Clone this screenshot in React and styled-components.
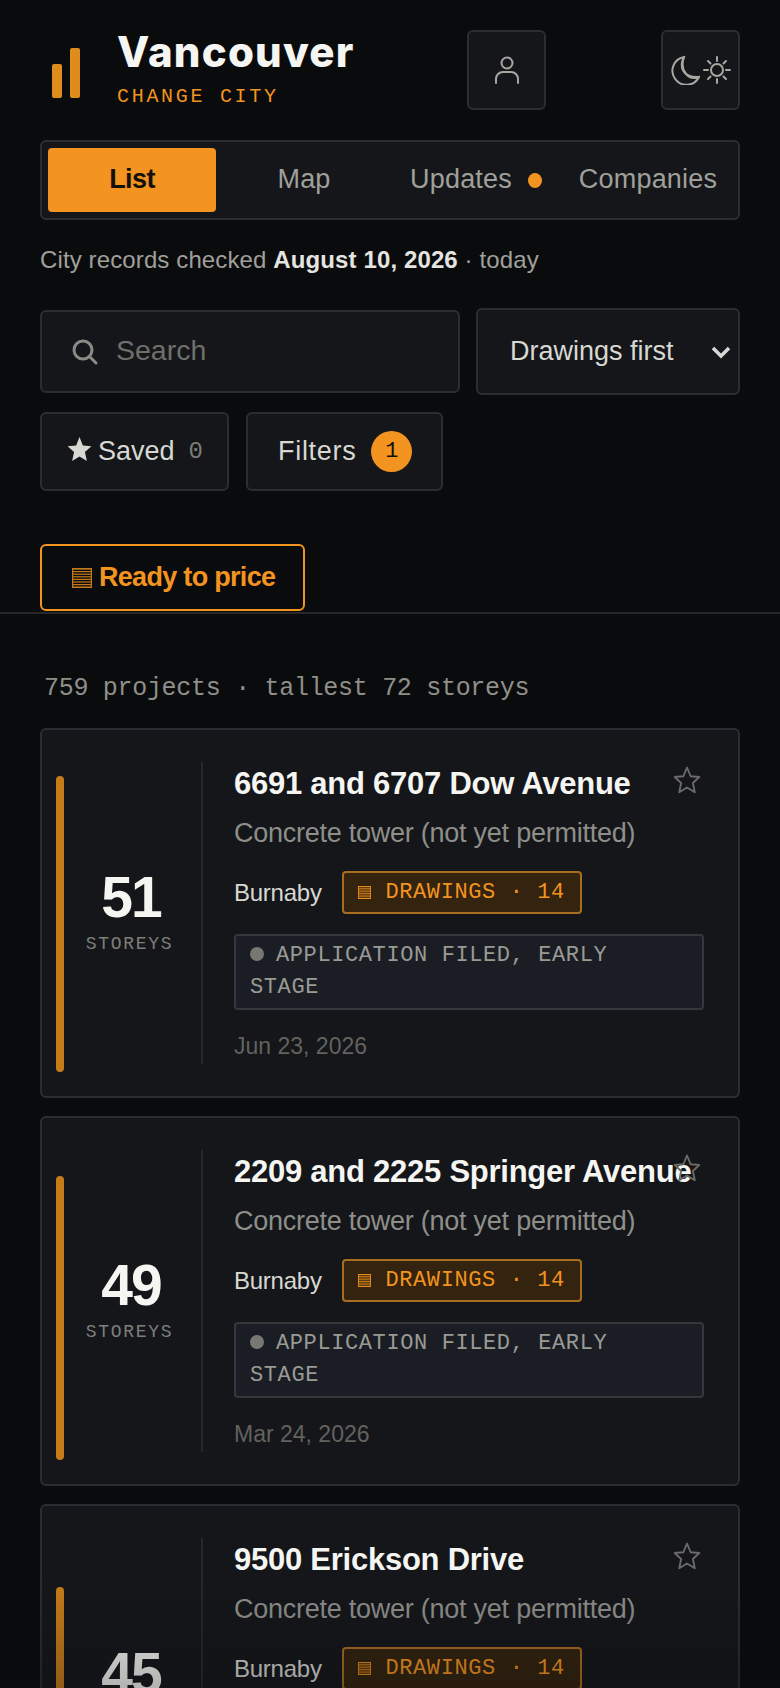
import styled, { createGlobalStyle } from "styled-components";

const sans = `"Liberation Sans", Arial, sans-serif`;
const mono = `"Liberation Mono", monospace`;
const orange = "#f2941f";

const GlobalStyle = createGlobalStyle`
  html, body {
    margin: 0;
    padding: 0;
    background: #0a0b0d;
    overflow: hidden;
  }
  * {
    box-sizing: border-box;
  }
`;

const Page = styled.div`
  position: relative;
  width: 780px;
  height: 1688px;
  overflow: hidden;
  background: #0a0b0d;
  font-family: ${sans};
  color: #e5e5e0;
`;

const BottomFade = styled.div`
  position: absolute;
  left: 0;
  right: 0;
  bottom: 0;
  height: 110px;
  pointer-events: none;
  background: linear-gradient(rgba(10, 11, 13, 0), rgba(10, 11, 13, 0.28));
`;

const Top = styled.div`
  padding: 30px 40px 0;
`;

const Header = styled.header`
  display: flex;
  align-items: flex-start;
  height: 79px;
`;

const Logo = styled.svg`
  width: 28px;
  height: 50px;
  margin: 18px 37px 0 12px;
  flex: none;
`;

const CityBlock = styled.div`
  width: 350px;
  flex: none;
`;

const CityName = styled.h1`
  margin: 0;
  font-family: Inter, ${sans};
  font-size: 42px;
  line-height: 44px;
  font-weight: 800;
  letter-spacing: 1.2px;
  color: #f5f5f2;
`;

const ChangeCity = styled.div`
  margin-top: 12px;
  font-family: ${mono};
  font-size: 20px;
  line-height: 22px;
  letter-spacing: 2.7px;
  color: ${orange};
`;

const IconButton = styled.button`
  width: 79px;
  height: 80px;
  padding: 0;
  display: flex;
  align-items: center;
  justify-content: center;
  gap: 2px;
  background: #14161a;
  border: 2px solid #2a2d31;
  border-radius: 6px;
  color: #a8a8a2;
`;

const HeaderGap = styled.div`
  flex: 1;
`;

const Tabs = styled.nav`
  margin-top: 31px;
  height: 80px;
  padding: 6px;
  display: grid;
  grid-template-columns: repeat(4, 1fr);
  gap: 4px;
  background: #14161a;
  border: 2px solid #2a2d31;
  border-radius: 6px;
`;

const Tab = styled.div`
  display: flex;
  align-items: center;
  justify-content: center;
  gap: 16px;
  padding-bottom: 2px;
  border-radius: 4px;
  font-size: 27px;
  letter-spacing: ${(p) => (p.$active ? "-0.6px" : "0.2px")};
  background: ${(p) => (p.$active ? orange : "transparent")};
  color: ${(p) => (p.$active ? "#14110c" : "#a0a09a")};
  font-weight: ${(p) => (p.$active ? 700 : 400)};
`;

const Dot = styled.span`
  width: 14px;
  height: 15px;
  margin-top: 2px;
  border-radius: 50%;
  background: ${orange};
`;

const Checked = styled.p`
  margin: 22px 0 0;
  font-size: 24px;
  line-height: 36px;
  letter-spacing: 0.12px;
  color: #a0a09a;

  strong {
    color: #e5e5e0;
  }
`;

const SearchRow = styled.div`
  margin-top: 30px;
  display: flex;
  align-items: center;
  gap: 16px;
`;

const SearchBox = styled.div`
  width: 420px;
  height: 83px;
  padding-left: 29px;
  display: flex;
  align-items: center;
  gap: 17px;
  background: #14161a;
  border: 2px solid #2a2d31;
  border-radius: 6px;
  color: #8a8a85;
`;

const Placeholder = styled.span`
  font-size: 28.5px;
  padding-bottom: 2px;
  color: #6f6f6b;
`;

const SortSelect = styled.div`
  width: 264px;
  height: 87px;
  padding: 0 7px 0 32px;
  display: flex;
  align-items: center;
  justify-content: space-between;
  background: #14161a;
  border: 2px solid #2a2d31;
  border-radius: 6px;
  font-size: 27px;
  color: #d8d8d3;
`;

const ButtonRow = styled.div`
  margin-top: 17px;
  display: flex;
  gap: 17px;
`;

const ToolButton = styled.div`
  height: 79px;
  display: flex;
  align-items: center;
  background: #14161a;
  border: 2px solid #2a2d31;
  border-radius: 6px;
  font-size: 27px;
  color: #d8d8d3;
`;

const SavedButton = styled(ToolButton)`
  width: 189px;
  padding-left: 25px;
`;

const FiltersButton = styled(ToolButton)`
  width: 197px;
  padding-left: 30px;
  gap: 15px;
  letter-spacing: 0.7px;
`;

const FilledStar = styled.svg`
  width: 25px;
  height: 27px;
  margin-right: 6px;
  margin-top: -4px;
`;

const SavedCount = styled.span`
  margin-left: 14px;
  font-family: ${mono};
  font-size: 24px;
  color: #7c7c78;
`;

const CountBadge = styled.span`
  width: 41px;
  height: 41px;
  display: flex;
  align-items: center;
  justify-content: center;
  border-radius: 50%;
  background: ${orange};
  font-family: ${mono};
  font-size: 22px;
  letter-spacing: 0;
  color: #14110c;
`;

const ReadyRow = styled.div`
  margin-top: 53px;
`;

const ReadyButton = styled.div`
  width: 265px;
  height: 67px;
  padding-left: 30px;
  display: flex;
  align-items: center;
  gap: 7px;
  border: 2px solid ${orange};
  border-radius: 6px;
  font-size: 27px;
  font-weight: 700;
  letter-spacing: -0.7px;
  color: ${orange};
`;

const Stripes = styled.svg`
  width: ${(p) => p.$size}px;
  height: ${(p) => p.$size}px;
  flex: none;
  opacity: ${(p) => p.$dim};
`;

const Divider = styled.hr`
  margin: 1px 0 0;
  border: none;
  height: 2px;
  background: #26282b;
`;

const Content = styled.main`
  padding: 0 40px;
`;

const Summary = styled.div`
  margin: 61px 0 0 4px;
  height: 28px;
  font-family: ${mono};
  font-size: 25px;
  line-height: 28px;
  letter-spacing: -0.3px;
  color: #8f8f8a;
`;

const CardList = styled.div`
  margin-top: 25px;
  display: flex;
  flex-direction: column;
  gap: 18px;
`;

const Card = styled.article`
  position: relative;
  height: 370px;
  padding: 0 34px 0 14px;
  flex: none;
  display: flex;
  background: #14161a;
  border: 2px solid #2a2d31;
  border-radius: 6px;
`;

const HeightBar = styled.div`
  width: 8px;
  flex: none;
  align-self: flex-end;
  margin-bottom: 24px;
  border-radius: 4px;
  background: #c77c1a;
`;

const StatColumn = styled.div`
  width: 139px;
  flex: none;
  margin: 32px 0 32px;
  padding-bottom: 6px;
  display: flex;
  flex-direction: column;
  align-items: center;
  justify-content: center;
  border-right: 2px solid #25272b;
`;

const StoreyCount = styled.div`
  font-size: 57px;
  line-height: 62px;
  font-weight: 700;
  letter-spacing: -2px;
  margin-right: 3px;
  color: #f5f5f2;
`;

const StoreyLabel = styled.div`
  margin-top: 6px;
  margin-right: 6px;
  font-family: ${mono};
  font-size: 18px;
  letter-spacing: 1.7px;
  color: #7f7f7a;
`;

const Body = styled.div`
  flex: 1;
  min-width: 0;
  padding: 35px 0 0 31px;
`;

const Title = styled.h2`
  margin: 0;
  font-size: 31px;
  line-height: 38px;
  font-weight: 700;
  white-space: nowrap;
  letter-spacing: -0.25px;
  color: #f5f5f2;
`;

const Description = styled.p`
  margin: 11px 0 0;
  font-size: 27px;
  line-height: 38px;
  letter-spacing: -0.25px;
  color: #8f8f8a;
`;

const MetaRow = styled.div`
  margin-top: 19px;
  display: flex;
  align-items: center;
  gap: 20px;
`;

const City = styled.span`
  font-size: 24px;
  letter-spacing: -0.25px;
  color: #d8d8d3;
`;

const DrawingsBadge = styled.span`
  width: 240px;
  height: 43px;
  display: flex;
  align-items: center;
  justify-content: center;
  gap: 14px;
  background: #33230f;
  border: 2px solid #a96d1f;
  border-radius: 4px;
  font-family: ${mono};
  font-size: 22px;
  letter-spacing: 0.6px;
  color: ${orange};
`;

const StatusBox = styled.div`
  margin-top: 20px;
  height: 76px;
  padding: 4px 24px 0 14px;
  background: #1a1e24;
  border: 2px solid #34373c;
  border-radius: 4px;
  font-family: ${mono};
  font-size: 22px;
  line-height: 32px;
  letter-spacing: 0.6px;
  color: #9a9a95;
`;

const StatusDot = styled.span`
  display: inline-block;
  width: 14px;
  height: 14px;
  margin-right: 12px;
  border-radius: 50%;
  background: #777773;
`;

const DateText = styled.div`
  margin-top: 18px;
  font-size: 23px;
  line-height: 36px;
  color: #62625e;
`;

const StarButton = styled.svg`
  position: absolute;
  top: 35px;
  right: 36px;
  width: 30px;
  height: 30px;
  color: #6a6a66;
`;

const projects = [
  { storeys: 51, title: "6691 and 6707 Dow Avenue", date: "Jun 23, 2026" },
  { storeys: 49, title: "2209 and 2225 Springer Avenue", date: "Mar 24, 2026" },
  { storeys: 45, title: "9500 Erickson Drive", date: "Mar 24, 2026" },
];

function DrawingGlyph({ size, dim }) {
  const lines = [];
  for (let y = 1; y < 20; y += 2.6) lines.push(<path key={y} d={`M0 ${y}h20`} />);
  return (
    <Stripes $size={size} $dim={dim} viewBox="0 0 20 20" fill="none" stroke={orange} strokeWidth="1.2">
      <rect x="0.6" y="0.6" width="18.8" height="18.8" />
      {lines}
    </Stripes>
  );
}

function ProjectCard({ project }) {
  return (
    <Card>
      <HeightBar style={{ height: project.storeys * 5.8 }} />
      <StatColumn>
        <StoreyCount>{project.storeys}</StoreyCount>
        <StoreyLabel>STOREYS</StoreyLabel>
      </StatColumn>
      <Body>
        <Title>{project.title}</Title>
        <Description>Concrete tower (not yet permitted)</Description>
        <MetaRow>
          <City>Burnaby</City>
          <DrawingsBadge>
            <DrawingGlyph size={13} dim={1} />
            DRAWINGS · 14
          </DrawingsBadge>
        </MetaRow>
        <StatusBox>
          <StatusDot />
          APPLICATION FILED, EARLY STAGE
        </StatusBox>
        <DateText>{project.date}</DateText>
      </Body>
      <StarButton viewBox="0 0 24 24" fill="none" stroke="currentColor" strokeWidth="1.5" strokeLinejoin="round">
        <path d="M12 2l2.9 7 6.9.6-5.1 4.8 1.5 7.4L12 18l-6.2 3.8 1.5-7.4L2.2 9.600 9.100 9z" />
      </StarButton>
    </Card>
  );
}

export default function App() {
  return (
    <Page>
      <GlobalStyle />
      <Top>
        <Header>
          <Logo viewBox="0 0 28 50" fill="#e08c1c">
            <rect x="0" y="16" width="10" height="34" rx="2" />
            <rect x="18" y="0" width="10" height="50" rx="2" />
          </Logo>
          <CityBlock>
            <CityName>Vancouver</CityName>
            <ChangeCity>CHANGE CITY</ChangeCity>
          </CityBlock>
          <IconButton aria-label="Account">
            <svg width="26" height="30" viewBox="0 0 26 30" fill="none" stroke="currentColor" strokeWidth="2" strokeLinecap="round">
              <circle cx="13" cy="8" r="5.500" />
              <path d="M2 28v-4a7 7 0 0 1 7-7h8a7 7 0 0 1 7 7v4" />
            </svg>
          </IconButton>
          <HeaderGap />
          <IconButton aria-label="Theme">
            <svg width="30" height="30" viewBox="0 0 30 30" fill="none" stroke="currentColor" strokeWidth="2">
              <path d="M14 2a14 14 0 1 0 15 20c-10 4-20-6-15-20z" />
              <path d="M14 2c-5 9-2 21 15 20" />
            </svg>
            <svg width="30" height="30" viewBox="0 0 30 30" fill="none" stroke="currentColor" strokeWidth="2" strokeLinecap="round">
              <circle cx="15" cy="15" r="6" />
              <path d="M15 2v4M15 24v4M2 15h4M24 15h4M6 6l2.500 2.500M21.500 21.500L24 24M6 24l2.500-2.500M21.500 8.500L24 6" />
            </svg>
          </IconButton>
        </Header>
        <Tabs>
          <Tab $active>List</Tab>
          <Tab>Map</Tab>
          <Tab>
            Updates
            <Dot />
          </Tab>
          <Tab>Companies</Tab>
        </Tabs>
        <Checked>
          City records checked <strong>August 10, 2026</strong> · today
        </Checked>
        <SearchRow>
          <SearchBox>
            <svg width="28" height="28" viewBox="0 0 28 28" fill="none" stroke="currentColor" strokeWidth="3" strokeLinecap="round">
              <circle cx="12" cy="12" r="9" />
              <path d="M19 19l6 6" />
            </svg>
            <Placeholder>Search</Placeholder>
          </SearchBox>
          <SortSelect>
            Drawings first
            <svg width="20" height="14" viewBox="0 0 20 14" fill="none" stroke="currentColor" strokeWidth="3.500">
              <path d="M2 3l8 8 8-8" />
            </svg>
          </SortSelect>
        </SearchRow>
        <ButtonRow>
          <SavedButton>
            <FilledStar viewBox="0 0 24 24" fill="#d8d8d3">
              <path d="M12 0l3.200 8.200 8.200.7-6.200 5.600 1.900 8.500L12 18.600 4.900 23l1.900-8.500L.6 8.900l8.200-.7z" />
            </FilledStar>
            Saved
            <SavedCount>0</SavedCount>
          </SavedButton>
          <FiltersButton>
            Filters
            <CountBadge>1</CountBadge>
          </FiltersButton>
        </ButtonRow>
        <ReadyRow>
          <ReadyButton>
            <DrawingGlyph size={20} dim={0.8} />
            Ready to price
          </ReadyButton>
        </ReadyRow>
      </Top>
      <Divider />
      <Content>
        <Summary>759 projects · tallest 72 storeys</Summary>
        <CardList>
          {projects.map((project) => (
            <ProjectCard key={project.title} project={project} />
          ))}
        </CardList>
      </Content>
      <BottomFade />
    </Page>
  );
}
